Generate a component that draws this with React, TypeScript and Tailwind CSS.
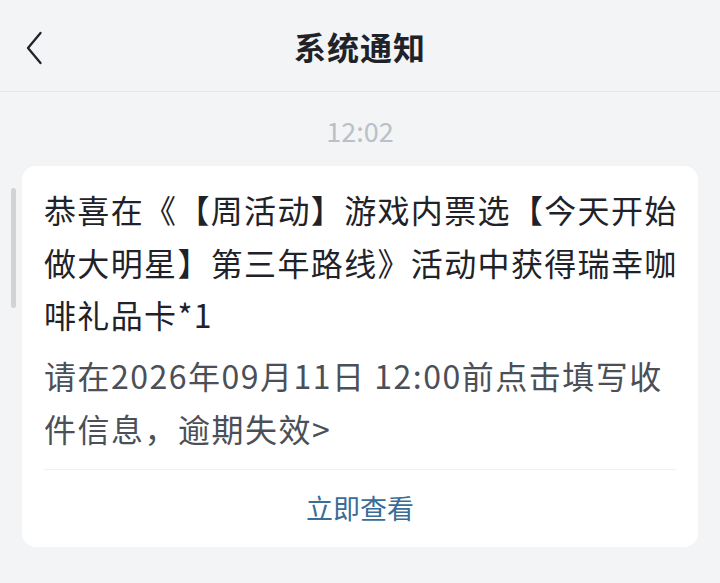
export default function App() {
  const cjk = { fontFamily: '"Noto Sans CJK SC", "Noto Sans", sans-serif' };

  return (
    <div className="relative min-h-[583px] w-[720px] bg-[#f3f4f6] [text-spacing-trim:space-all]" style={cjk}>
      {/* Header */}
      <div className="relative flex h-[92px] items-center justify-center border-b border-[#e6e7ea]">
        <button className="absolute left-[22px] top-[26px] p-1">
          <svg width="18" height="36" viewBox="0 0 18 36" fill="none">
            <path
              d="M14.5 3 L2 18 L14.5 33"
              stroke="#1f2329"
              strokeWidth="2.3"
              strokeLinecap="round"
              strokeLinejoin="round"
            />
          </svg>
        </button>
        <h1 className="text-[32px] font-bold tracking-[1px] text-[#1f2329]">系统通知</h1>
      </div>

      {/* Time */}
      <div className="pt-[22px] text-center text-[27px] leading-[34px] text-[#bac0c8]">12:02</div>

      {/* Scroll indicator */}
      <div className="absolute left-[11px] top-[188px] h-[120px] w-[5px] rounded-full bg-[#d2d3d5]" />

      {/* Card */}
      <div className="mx-[22px] mt-[18px] rounded-[14px] bg-white">
        <div className="px-[22px] pt-[17px] pb-[14px]">
          <div className="text-[32px] leading-[52.5px] tracking-[1.35px] text-[#1f2329] whitespace-nowrap">
            <div>恭喜在《【周活动】游戏内票选【今天开始</div>
            <div>做大明星】第三年路线》活动中获得瑞幸咖</div>
            <div>啡礼品卡*1</div>
          </div>
          <div className="mt-[8px] text-[32px] leading-[53px] tracking-[1.5px] text-[#4b5058] whitespace-nowrap">
            <div>请在2026年09月11日 12:00前点击填写收</div>
            <div>件信息，逾期失效&gt;</div>
          </div>
        </div>
        <div className="mx-[22px] h-px bg-[#eff0f2]" />
        <div className="flex h-[77px] items-center justify-center text-[27px] text-[#3a6c98]">
          立即查看
        </div>
      </div>
    </div>
  );
}
